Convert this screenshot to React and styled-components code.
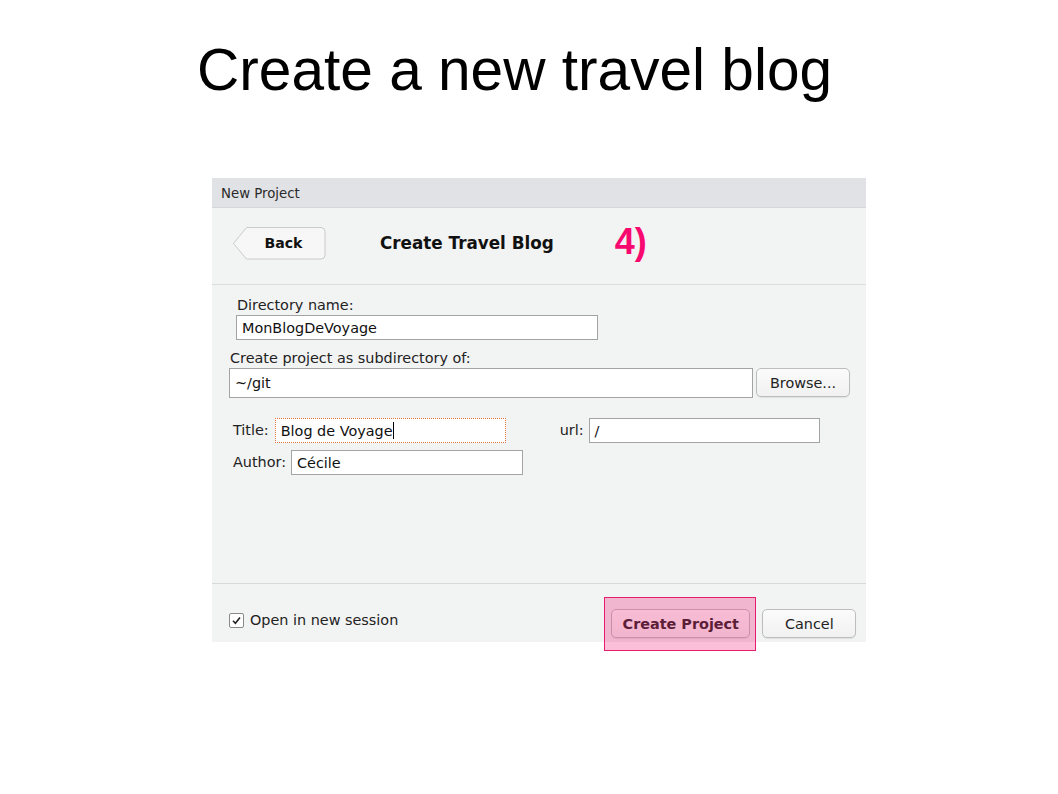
import styled, { createGlobalStyle } from 'styled-components'

const GlobalStyle = createGlobalStyle`
    body {
        margin: 0;
        background: #ffffff;
        font-family: "DejaVu Sans", sans-serif;
    }
`

const Page = styled.div`
    width: 1058px;
    height: 794px;
    overflow: hidden;
`

const SlideTitle = styled.h1`
    margin: 36px 0 0 197px;
    font-family: "Liberation Sans", Arial, sans-serif;
    font-weight: normal;
    font-size: 58.6px;
    line-height: 68px;
    color: #000;
`

const Dialog = styled.div`
    margin: 74px 0 0 212px;
    width: 654px;
    background: #f2f3f3;
    color: #222;
    font-size: 14.4px;
`

const TitleBar = styled.div`
    height: 29px;
    line-height: 31px;
    padding-left: 9px;
    background: #e1e2e6;
    border-bottom: 1px solid #d6d7db;
    font-size: 13.3px;
    color: #2a2a2a;
`

const Header = styled.div`
    height: 77px;
    box-sizing: border-box;
    padding-top: 19px;
    display: flex;
    align-items: flex-start;
    border-bottom: 1px solid #dcdddd;
`

const BackButton = styled.div`
    position: relative;
    margin-left: 21px;
    width: 93px;
    height: 33px;
    display: flex;
    align-items: center;
    justify-content: center;
    padding: 0 0 1px 8px;
    box-sizing: border-box;
    font-weight: bold;
    font-size: 14.1px;
    color: #111;
    span { position: relative; }
    svg { position: absolute; inset: 0; }
`

const HeaderTitle = styled.div`
    margin-left: 54px;
    line-height: 33px;
    font-weight: bold;
    font-size: 16.8px;
    color: #111;
`

const StepMark = styled.div`
    margin-left: 61px;
    margin-top: 1px;
    font-family: "Liberation Sans", Arial, sans-serif;
    font-weight: bold;
    font-size: 36px;
    line-height: 28px;
    color: #f7096f;
`

const Body = styled.div`
    height: 286px;
    padding-top: 12px;
    border-bottom: 1px solid #d8d9d9;
`

const Label = styled.div`
    margin-left: ${p => p.$indent || 0}px;
    margin-top: ${p => p.$mt || 0}px;
    line-height: 17px;
    white-space: nowrap;
`

const Input = styled.div`
    box-sizing: border-box;
    flex-shrink: 0;
    width: ${p => p.$w}px;
    height: ${p => p.$h || 25}px;
    margin-left: ${p => p.$ml || 0}px;
    margin-top: ${p => p.$mt || 0}px;
    background: #fff;
    border: 1px ${p => p.$focus ? 'dotted #e8743b' : 'solid #a3a3a3'};
    padding-left: 5px;
    display: flex;
    align-items: center;
    color: #111;
    white-space: nowrap;
`

const Caret = styled.span`
    display: inline-block;
    width: 1px;
    height: 17px;
    background: #000;
`

const Row = styled.div`
    display: flex;
    align-items: ${p => p.$top ? 'flex-start' : 'center'};
    margin-top: ${p => p.$mt || 0}px;
    margin-left: ${p => p.$ml || 0}px;
`

const Button = styled.div`
    box-sizing: border-box;
    flex-shrink: 0;
    width: ${p => p.$w}px;
    height: 29px;
    margin-left: ${p => p.$ml || 0}px;
    border: 1px solid #bdbdbd;
    border-radius: 5px;
    background: linear-gradient(#fbfbfb, #f1f1f1);
    box-shadow: 0 1px 1px rgba(0, 0, 0, 0.08);
    display: flex;
    align-items: center;
    justify-content: center;
    font-weight: ${p => p.$bold ? 'bold' : 'normal'};
    color: #222;
`

const Footer = styled.div`
    position: relative;
    height: 58px;
    display: flex;
    align-items: flex-start;
    padding-top: 25px;
    box-sizing: border-box;
`

const CheckRow = styled.div`
    display: flex;
    align-items: center;
    gap: 6px;
    margin: 3px 0 0 17px;
`

const Box = styled.div`
    width: 15px;
    height: 15px;
    box-sizing: border-box;
    border: 1px solid #8a8a8a;
    border-radius: 2px;
    background: #fff;
    display: flex;
    align-items: center;
    justify-content: center;
`

const Highlight = styled.div`
    position: absolute;
    left: 392px;
    top: 13px;
    width: 152px;
    height: 54px;
    box-sizing: border-box;
    border: 1.5px solid #ea1a6d;
    background: rgba(240, 25, 115, 0.28);
`

export default function App() {
    return (
        <Page>
            <GlobalStyle />
            <SlideTitle>Create a new travel blog</SlideTitle>
            <Dialog>
                <TitleBar>New Project</TitleBar>
                <Header>
                    <BackButton>
                        <svg width="93" height="33" viewBox="0 0 93 33">
                            <path d="M13.5 0.5 H88 a4 4 0 0 1 4 4 V28 a4 4 0 0 1 -4 4 H13.5 L0.5 16.5 Z" fill="#f7f7f8" stroke="#cacaca" />
                        </svg>
                        <span>Back</span>
                    </BackButton>
                    <HeaderTitle>Create Travel Blog</HeaderTitle>
                    <StepMark>4)</StepMark>
                </Header>
                <Body>
                    <Label $indent={25}>Directory name:</Label>
                    <Input $w={362} $ml={24} $mt={1}>MonBlogDeVoyage</Input>
                    <Label $indent={18} $mt={10}>Create project as subdirectory of:</Label>
                    <Row $top $mt={1} $ml={17}>
                        <Input $w={524} $h={30}>~/git</Input>
                        <Button $w={94} $ml={3}>Browse...</Button>
                    </Row>
                    <Row $mt={20} $ml={21}>
                        <Label>Title:</Label>
                        <Input $w={231} $ml={6} $focus>Blog de Voyage<Caret /></Input>
                        <Label $indent={54}>url:</Label>
                        <Input $w={231} $ml={5}>/</Input>
                    </Row>
                    <Row $mt={7} $ml={21}>
                        <Label>Author:</Label>
                        <Input $w={232} $h={25} $ml={5}>Cécile</Input>
                    </Row>
                </Body>
                <Footer>
                    <CheckRow>
                        <Box>
                            <svg width="11" height="11" viewBox="0 0 11 11">
                                <path d="M2 5.8 L4.4 8.2 L9 2.5" fill="none" stroke="#222" strokeWidth="1.6" />
                            </svg>
                        </Box>
                        <span>Open in new session</span>
                    </CheckRow>
                    <Button $w={139} $ml={213} $bold>Create Project</Button>
                    <Button $w={94} $ml={12}>Cancel</Button>
                    <Highlight />
                </Footer>
            </Dialog>
        </Page>
    )
}
